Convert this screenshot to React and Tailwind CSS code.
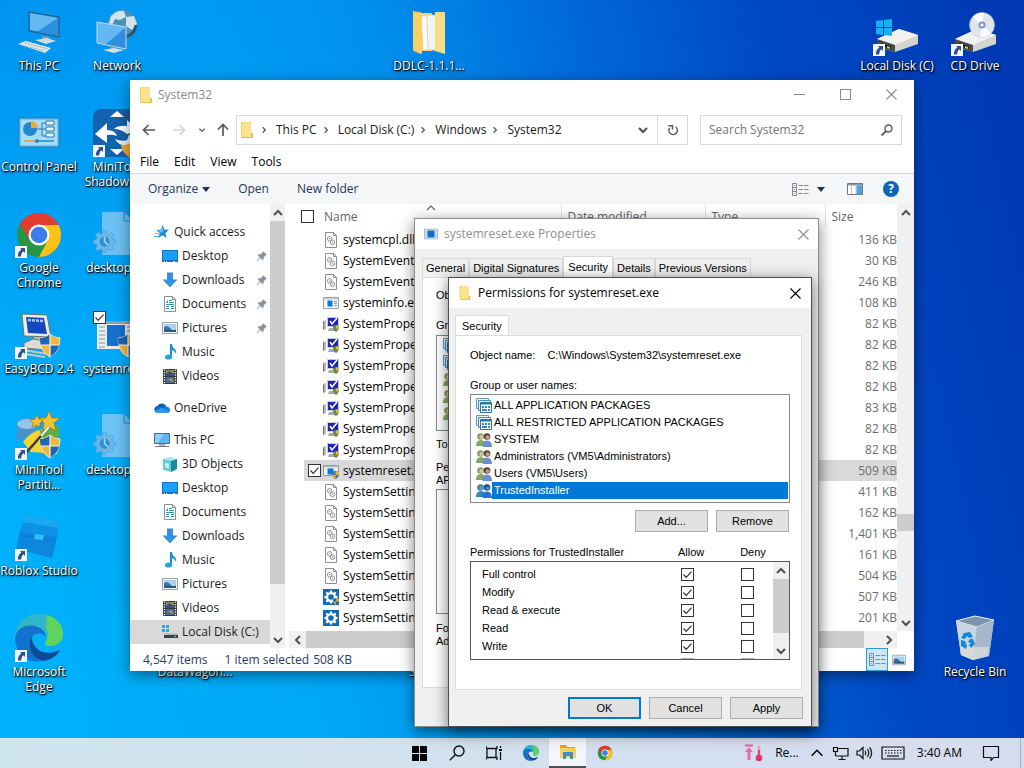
import React from 'react';
import { clsx } from 'clsx';

const files = [
  ['systemcpl.dll', '136 KB', 'dll'],
  ['SystemEventsBrokerClient.dll', '30 KB', 'dll'],
  ['SystemEventsBrokerServer.dll', '246 KB', 'dll'],
  ['systeminfo.exe', '108 KB', 'exe'],
  ['SystemPropertiesAdvanced.exe', '82 KB', 'props'],
  ['SystemPropertiesComputerName.exe', '82 KB', 'props'],
  ['SystemPropertiesDataExecutionPrevention.exe', '82 KB', 'props'],
  ['SystemPropertiesHardware.exe', '82 KB', 'props'],
  ['SystemPropertiesPerformance.exe', '83 KB', 'props'],
  ['SystemPropertiesProtection.exe', '82 KB', 'props'],
  ['SystemPropertiesRemote.exe', '82 KB', 'props'],
  ['systemreset.exe', '509 KB', 'reset'],
  ['SystemSettings.DataModel.dll', '411 KB', 'dll'],
  ['SystemSettings.DeviceEncryptionHandlers.dll', '162 KB', 'dll'],
  ['SystemSettings.Handlers.dll', '1,401 KB', 'dll'],
  ['SystemSettings.SettingsExtensibility.dll', '161 KB', 'dll'],
  ['SystemSettings.UserAccountsHandlers.dll', '504 KB', 'dll'],
  ['SystemSettingsAdminFlows.exe', '507 KB', 'gearShield'],
  ['SystemSettingsBroker.exe', '201 KB', 'gear'],
];

const quickAccess = [
  ['Desktop', 'desktop', true],
  ['Downloads', 'downloads', true],
  ['Documents', 'documents', true],
  ['Pictures', 'pictures', true],
  ['Music', 'music', false],
  ['Videos', 'videos', false],
];

const thisPc = [
  ['3D Objects', 'objects'],
  ['Desktop', 'desktop'],
  ['Documents', 'documents'],
  ['Downloads', 'downloads'],
  ['Music', 'music'],
  ['Pictures', 'pictures'],
  ['Videos', 'videos'],
  ['Local Disk (C:)', 'disk'],
];

const principals = [
  ['ALL APPLICATION PACKAGES', 'package'],
  ['ALL RESTRICTED APPLICATION PACKAGES', 'package'],
  ['SYSTEM', 'users'],
  ['Administrators (VM5\\Administrators)', 'users'],
  ['Users (VM5\\Users)', 'users'],
  ['TrustedInstaller', 'usersSelected'],
];

const permissions = ['Full control', 'Modify', 'Read & execute', 'Read', 'Write'];

/* ---------- small icons, 16x16 ---------- */

const gearPath = 'M7 1.5h2l.3 1.7 1.3.5 1.4-1 1.4 1.4-1 1.4.5 1.3 1.6.3v2l-1.6.3-.5 1.3 1 1.4-1.4 1.4-1.4-1-1.3.5-.3 1.6H7l-.3-1.6-1.3-.5-1.4 1-1.4-1.4 1-1.4-.5-1.3-1.6-.3v-2l1.6-.3.5-1.3-1-1.4L4 2.7l1.4 1 1.3-.5z';

const glyphs = {
  star: (
    <>
      <path d="M8.5 1l1.9 4.6 4.6.2-3.6 3.1 1.1 5-4-2.7L4.400 14l1.300-4.900L2.300 6l4.500-.3z" fill="#1c8fe0" />
      <path d="M0 12.500h5M1 9.500h4M3 7h3" stroke="#5bb4ee" strokeWidth="1" />
      <path d="M8.500 3l1.200 3.200-3 2.800-1.500-2.200z" fill="#5fbcf5" />
    </>
  ),
  desktop: (
    <>
      <path d="M0 2h16v12H0z" fill="#0a78d1" />
      <path d="M1 3h14v9H1z" fill="#18a0f5" />
      <path d="M2 13.500h1m1 0h1m6 0h2" stroke="#cfe9fb" strokeWidth="1" />
    </>
  ),
  downloads: <path d="M5 .5h6v7h4.500L8 15.500.5 7.500H5z" fill="#3a8fdc" />,
  documents: (
    <>
      <path d="M2.500.5h8l3 3v12h-11z" fill="#fff" stroke="#8a9299" />
      <path d="M10.500.5v3h3" fill="none" stroke="#8a9299" />
      <path d="M7 4.500h3M7 6.500h5M4 8.500h8M4 10.500h3m2 0h3M4 12.500h3m2 0h3" stroke="#3b93a8" />
      <path d="M4 7l2-3v3z" fill="#2b7cb5" />
    </>
  ),
  pictures: (
    <>
      <path d="M.5 2.500h15v11H.5z" fill="#f6f8fa" stroke="#9aa0a6" />
      <path d="M2 4h12v8H2z" fill="#a5d2ef" />
      <path d="M2 7q4-2 7 2t5 0v3H2z" fill="#3a6f99" />
      <path d="M2 10h12v2H2z" fill="#2a5a86" />
    </>
  ),
  music: (
    <>
      <path d="M8 0h2q0 3 2.500 5t1 5q0-3-3.500-4v7H8z" fill="#1590d6" />
      <ellipse cx="6.500" cy="13" rx="3.500" ry="2.600" fill="#22a1e6" />
    </>
  ),
  videos: (
    <>
      <path d="M1 1h14v15H1z" fill="#33383e" />
      <path d="M4 2h8v6H4z" fill="#8c9346" />
      <path d="M4 9h8v6H4z" fill="#4b6d9e" />
      <path d="M4 6l3-3 5 3v2H4z" fill="#3f4d8a" />
      <path d="M6 12l3-2 3 4z" fill="#c08b3e" />
      <path d="M2.500 1.500v14M13.500 1.500v14" stroke="#fff" strokeWidth="1.400" strokeDasharray="1.300 1.200" />
    </>
  ),
  cloud: (
    <>
      <path d="M3.500 13a3.500 3.500 0 01-.3-6.900A5 5 0 0112.400 7 3 3 0 0113 13z" fill="#0c62bd" />
      <path d="M6 13l-3-.1L1 11l6.500-3.500L15.800 11q-.8 2-2.800 2z" fill="#2a9cec" />
      <path d="M8 7.800l4.400-1q3 .2 3.500 3.200l-.5 1.500z" fill="#1681dc" />
    </>
  ),
  pc: (
    <>
      <path d="M.5 1.500h15v10H.5z" fill="#5fb4ef" stroke="#3e7193" />
      <path d="M1 2h9L4 11H1z" fill="#8ad0fb" />
      <path d="M5 12h6v2H5z" fill="#a6b3bd" />
      <path d="M1 14.500h14" stroke="#6d7f8c" />
    </>
  ),
  objects: (
    <>
      <path d="M1 3l7-2 7 2-6 2z" fill="#9fe8ee" />
      <path d="M1 3l8 2v11l-8-2.500z" fill="#5fcbd3" />
      <path d="M9 5l6-2v10l-6 3z" fill="#168a9f" />
      <path d="M3 6.500l4 1v5l-4-1z" fill="#b8f0f3" />
    </>
  ),
  disk: (
    <>
      <path d="M0 1h3v3H0zm4 0h3v3H4zM0 5h3v3H0zm4 0h3v3H4z" fill="#12b2ee" />
      <path d="M3 9h12l1 2H2z" fill="#b9bcc0" />
      <path d="M2 11h14v3H2z" fill="#3c4146" />
      <path d="M12 12.500h2" stroke="#5be35b" />
    </>
  ),
  dll: (
    <>
      <path d="M2.500.5h8l3 3v12h-11z" fill="#fdfdfd" stroke="#8d8f92" />
      <path d="M10.500.5v3h3" fill="none" stroke="#8d8f92" />
      <circle cx="6.700" cy="6.800" r="2.300" fill="none" stroke="#8f959b" />
      <circle cx="9.500" cy="10.300" r="2.300" fill="none" stroke="#8f959b" />
      <circle cx="6.700" cy="6.800" r=".8" fill="#8f959b" />
      <circle cx="9.500" cy="10.300" r=".8" fill="#8f959b" />
    </>
  ),
  exe: (
    <>
      <path d="M.5 2.500h15v11H.5z" fill="#f3f6f8" stroke="#9aa4ac" />
      <path d="M1 3h14v1.500H1z" fill="#c3cdd5" />
      <path d="M4.500 5.500h5v6h-5z" fill="#0f76d2" />
      <path d="M11 6.500h3M11 8.500h3M11 10.500h3" stroke="#69a892" />
    </>
  ),
  exeWindow: (
    <>
      <path d="M.5 2.500h15v11H.5z" fill="#dbe7f0" stroke="#9db4c6" />
      <path d="M4 4h8v8H4z" fill="#0d6fc9" />
      <path d="M2.500 4v8M13.500 4v8" stroke="#b9d3e6" strokeWidth="1.500" />
    </>
  ),
  props: (
    <>
      <path d="M0 5l3-1v9l-3 1z" fill="#b9bcbf" />
      <path d="M.5 5.500v8" stroke="#6f7275" />
      <path d="M4 1h12v10H4z" fill="#c9ccd0" />
      <path d="M5 2h10v8H5z" fill="#1c25b8" />
      <path d="M7 5l2 3 5-6" fill="none" stroke="#fff" strokeWidth="1.500" />
      <path d="M6 12h8v3H5z" fill="#a7abaf" />
      <path d="M10 10l3-1 3 1v2q-1 3-3 4-2-1-3-4z" fill="#6c8b4b" />
      <path d="M13 9l3 1v2.500h-3z" fill="#d9bb43" />
    </>
  ),
  reset: (
    <>
      <path d="M.5 2.500h15v10H.5z" fill="#eef3f7" stroke="#8c98a3" />
      <path d="M1 3h14v1.500H1z" fill="#b6c3cd" />
      <path d="M4.500 5.500h6v6h-6z" fill="#0f76d2" />
      <path d="M9 9l3.500-1.500L16 9v3q-1 3-3.500 4Q10 15 9 12z" fill="#3577b9" />
      <path d="M12.500 7.500L16 9v3h-3.500zM9 12h3.500v4Q10 15 9 12z" fill="#e2b338" />
    </>
  ),
  gear: (
    <>
      <path d="M0 0h16v16H0z" fill="#0f6cbd" />
      <path d={gearPath} fill="#fff" />
      <circle cx="8" cy="8" r="2.800" fill="#0f6cbd" />
    </>
  ),
  gearShield: (
    <>
      <path d="M0 0h16v16H0z" fill="#0f6cbd" />
      <path d={gearPath} fill="#fff" />
      <circle cx="8" cy="8" r="2.800" fill="#0f6cbd" />
      <path d="M10 10l3-1 3 1v2q-1 3-3 4-2-1-3-4z" fill="#2a68ad" />
      <path d="M13 9l3 1v2.500h-3zM10 12.500h3V16q-2-1-3-3.500z" fill="#dba93a" />
    </>
  ),
  folder: (
    <>
      <path d="M2 0h10v14H2z" fill="#fbdf7e" />
      <path d="M2 0h2v16H2z" fill="#f0cf63" />
      <path d="M3 2l9-1v15H3z" fill="#fce38c" />
      <path d="M12 11h2v5H3v-1h9z" fill="#e9c14d" />
    </>
  ),
  package: (
    <>
      <path d="M.5.5h12v10H.5z" fill="#e8f3fb" stroke="#5d9cc4" />
      <path d="M2.500 2.500h12v10h-12z" fill="#e8f3fb" stroke="#4a8fbb" />
      <path d="M4.500 4.500h11v10h-11z" fill="#fff" stroke="#2b76a8" />
      <path d="M5 5h10v1.500H5z" fill="#2b76a8" />
      <path d="M6 8h2v2H6zm3 0h2v2H9zm3 0h2v2h-2zM6 11h5v2H6zm6 0h2v2h-2z" fill="#3b88bc" />
    </>
  ),
  users: (
    <>
      <circle cx="4.500" cy="4.500" r="3.300" fill="#8d9b5c" />
      <circle cx="5.300" cy="5" r="1.900" fill="#d5c79a" />
      <path d="M0 14q0-6 5-6t5 6z" fill="#86a862" />
      <circle cx="11" cy="4.500" r="3.300" fill="#5a4138" />
      <circle cx="11.600" cy="5.200" r="1.900" fill="#c99f86" />
      <path d="M6.500 15q0-6.500 4.700-6.500T16 15z" fill="#6a8fd0" />
    </>
  ),
  usersSelected: (
    <>
      <circle cx="4.500" cy="4.500" r="3.300" fill="#3c83b1" />
      <circle cx="5.300" cy="5" r="1.900" fill="#5c9cc4" />
      <path d="M0 14q0-6 5-6t5 6z" fill="#3187bb" />
      <circle cx="11" cy="4.500" r="3.300" fill="#174f93" />
      <circle cx="11.600" cy="5.200" r="1.900" fill="#4c86bd" />
      <path d="M6.500 15q0-6.500 4.700-6.500T16 15z" fill="#2370cf" />
    </>
  ),
  pin: (
    <path d="M9.500 2.500l4 4-1.200.6-2.300 2.200-.3 2.700-1 .8-2.500-2.500L2.500 14l-.6-.5 3.500-3.800L3 7.200l.8-1 2.700-.3L8.700 3.700z" fill="#8b9299" />
  ),
};

function Glyph({ name, className = 'size-4' }) {
  return (
    <svg viewBox="0 0 16 16" className={clsx('shrink-0', className)} aria-hidden="true">
      {glyphs[name]}
    </svg>
  );
}

const chevrons = {
  up: 'M2 8l4-4 4 4',
  down: 'M2 4l4 4 4-4',
  left: 'M8 2L4 6l4 4',
  right: 'M4 2l4 4-4 4',
};

function Chevron({ dir, className = 'size-3 text-[#505050]', width = 2 }) {
  return (
    <svg viewBox="0 0 12 12" className={clsx('shrink-0', className)} fill="none" stroke="currentColor" strokeWidth={width} aria-hidden="true">
      <path d={chevrons[dir]} />
    </svg>
  );
}

function Cross({ className }) {
  return (
    <svg viewBox="0 0 11 11" className={clsx('size-[11px]', className)} stroke="currentColor" strokeWidth="1.100" aria-hidden="true">
      <path d="M.5.5l10 10M10.500.5l-10 10" />
    </svg>
  );
}

function Check({ label, checked = false }) {
  return (
    <span className="inline-grid size-[13px] shrink-0 align-top">
      <input
        type="checkbox"
        aria-label={label}
        defaultChecked={checked}
        className="peer col-start-1 row-start-1 size-[13px] appearance-none border border-[#333] bg-white"
      />
      <svg viewBox="0 0 13 13" className="pointer-events-none invisible col-start-1 row-start-1 size-[13px] peer-checked:visible" fill="none" stroke="#333" strokeWidth="1.200" aria-hidden="true">
        <path d="M2.500 6.500l2.700 2.800 5.300-5.600" />
      </svg>
    </span>
  );
}

/* ---------- desktop icons, 48x48 ---------- */

function Shield() {
  return (
    <>
      <path d="M25 27q6 0 10-4 4 4 10 4 0 14-10 19-10-5-10-19z" fill="#f0b73c" stroke="#e8e4d4" />
      <path d="M35 23q-4 4-10 4 0 4 .8 7H35zM35 34h9.200Q42 42 35 46z" fill="#1d65b5" />
      <path d="M35 23v23M26 34h18" stroke="#f5f5f0" strokeWidth="1.200" />
    </>
  );
}

function ChromeMark() {
  return (
    <>
      <circle cx="24" cy="24" r="22" fill="#269645" />
      <path d="M24 14h19.600A22 22 0 0124 46l9-17z" fill="#fbc116" />
      <path d="M4.900 13A22 22 0 0143.600 14H24L15 29z" fill="#e33b2e" />
      <circle cx="24" cy="24" r="10.500" fill="#fff" />
      <circle cx="24" cy="24" r="8.300" fill="#3b7de9" />
    </>
  );
}

function EdgeMark() {
  return (
    <>
      <path d="M0 22C1 8 11 0 24 0c14 0 24 9 24 20 0 8-6 12-13 12-5 0-6-2-4-5 3-6-2-12-9-12C12 15 4 19 0 26z" fill="#2fb6c8" />
      <path d="M32 1c10 3 16 10 16 19 0 8-6 12-13 12-5 0-6-2-4-5 3-6 2-10 0-13z" fill="#5fd35e" />
      <path d="M0 24C1 15 10 10 19 12c7 1 12 6 12 11-3-4-10-5-14 0-6 8-1 20 10 24C12 50 0 39 0 24z" fill="#1273ce" />
      <path d="M17 23c-6 9 0 21 11 24 8-1 13-5 16-9 1-2 0-2-2-1-12 5-25-1-25-14z" fill="#0c4b95" />
    </>
  );
}

const FileGear = (
  <>
    <path d="M9 2h22l9 9v34H9z" fill="#7fc8f5" opacity=".85" />
    <path d="M31 2v9h9" fill="none" stroke="#2a86bd" />
    <g transform="translate(-2 18) scale(1.700)">
      <path d={gearPath} fill="#6db7e8" stroke="#4b9fd5" strokeWidth=".4" />
      <circle cx="8" cy="8" r="3" fill="#2f8fd0" />
      <path d="M8 5v3l2 2" fill="none" stroke="#9bd3f5" />
    </g>
  </>
);

const Drive = (
  <>
    <path d="M4 31l22-10 19 6v9L22 44 4 39z" fill="#d4d4d2" />
    <path d="M4 31l22-10 19 6-23 10z" fill="#f1f1ef" />
    <path d="M4 31l18 6v7L4 39z" fill="#4b4b48" />
    <path d="M8 35l10 3v3L8 38z" fill="#20201e" />
    <path d="M14 38l3 1v2l-3-1z" fill="#b3dd45" />
  </>
);

const artwork = {
  pc: (
    <>
      <path d="M15 5l28 5v18l-28-6z" fill="#2f8fdf" />
      <path d="M15 5l28 5-20 13-8-1z" fill="#65b9f2" />
      <path d="M14 4l30 5v20l-30-6z" fill="none" stroke="#31556f" />
      <path d="M27 28l7 1v4h-7z" fill="#8b9aa6" />
      <path d="M20 32l12-2 9 3-10 3z" fill="#d5dce1" />
      <path d="M3 36l8-3 25 7-6 5z" fill="#e4e8ea" />
      <path d="M6 37l24 6M10 35l23 6" stroke="#98a7b1" strokeDasharray="2 1" />
    </>
  ),
  network: (
    <>
      <circle cx="29" cy="17" r="15" fill="#4d8fb5" />
      <path d="M18 8q6-6 13-5l2 6-6 3-5-1-3 6-3-2zM33 9l8-1 3 8-5 6-6-4z" fill="#cfe3ec" />
      <path d="M33 29q9-3 10-12" stroke="#2b5673" strokeWidth="3" fill="none" />
      <path d="M4 14l29 5v22L4 35z" fill="#2f8fdf" />
      <path d="M4 14l29 5-20 17-9-1z" fill="#64b8f2" />
      <path d="M4 14l29 5v22L4 35z" fill="none" stroke="#c5dae8" />
      <path d="M17 38l6 1v3h-6z" fill="#8b9aa6" />
      <path d="M10 42l11-2 10 2-10 3z" fill="#d5dce1" />
    </>
  ),
  control: (
    <>
      <path d="M4 9h40v29H4z" fill="#72c6f3" stroke="#2a79ad" />
      <path d="M6 11h36v25H6z" fill="#a3ddf8" />
      <circle cx="15" cy="20" r="7" fill="#2487cf" />
      <path d="M16 19v-7a7 7 0 017 7z" fill="#f2a93a" />
      <path d="M22 20h5v-6h4m-4 6h4m-4 0v7h4" stroke="#2f7aa8" fill="none" />
      <path d="M31 12h8v4h-8zm0 6h8v4h-8zm0 6h8v4h-8z" fill="#e5f6fd" stroke="#2f7aa8" />
      <path d="M9 32h12" stroke="#e59432" strokeWidth="1.500" />
      <path d="M21 32h18" stroke="#2487cf" strokeWidth="1.500" />
      <circle cx="22" cy="32" r="2" fill="#2487cf" />
    </>
  ),
  shadowMaker: (
    <>
      <rect width="48" height="48" rx="8" fill="#1262ad" />
      <path d="M24 2l7 6H17zM24 46l7-6H17z" fill="#fff" />
      <path d="M2 25l12-11v7q8 0 10 6-5-2-10-1v8z" fill="#fff" />
      <path d="M46 22L34 11v6q-9-1-13 3 7 0 13 5z" fill="#fff" />
      <path d="M46 26L36 36q-10 2-14-6 7 3 12 1l2-5z" fill="#e9f1f8" />
      <path d="M28 36q8 0 11-3 4 3 9 3v12H36q-7-4-8-12z" fill="#f0a92d" />
    </>
  ),
  chrome: (
    <g transform="translate(0 1)">
      <ChromeMark />
    </g>
  ),
  fileGear: FileGear,
  easybcd: (
    <>
      <path d="M7 3l25 1 4 22-27-1z" fill="#ecebe4" stroke="#72706a" />
      <path d="M11 6l18 1 3 16-19-1z" fill="#1447c0" />
      <path d="M13 9l16 1" stroke="#a9c8f7" strokeWidth="2.500" strokeDasharray="3 1" />
      <path d="M19 26h9v4h-9z" fill="#b8b6ae" />
      <path d="M9 32l9-4 18 3-5 8-22-2z" fill="#dddcd4" stroke="#77756e" />
      <path d="M10 43l20 3M8 39l25 4" stroke="#c9c8c1" strokeWidth="2" />
      <Shield />
    </>
  ),
  sysreset: (
    <>
      <path d="M4 10h44v28H4z" fill="#e8ecef" />
      <path d="M4 10h44v3H4z" fill="#95a1aa" />
      <path d="M6 16h6M6 20h6M6 24h6M6 28h6M6 32h6M6 36h6" stroke="#8e99a1" />
      <path d="M14 14h18v21H14z" fill="#1671cc" />
      <path d="M34 16h8M34 20h8" stroke="#6c7981" />
      <Shield />
    </>
  ),
  partition: (
    <>
      <path d="M2 11q8-8 20-3v14Q12 24 2 30z" fill="#4c92ca" />
      <ellipse cx="12" cy="12" rx="10" ry="5" fill="#95c5e7" />
      <path d="M8 30q10-14 28-14l8 6-2 20-26-2z" fill="#f1d535" />
      <path d="M24 18l20-4v12H28z" fill="#60ae3f" />
      <path d="M34-1l3 7 8 0-6 5 2 8-7-4-6 4 1-8-5-5 7 0z" fill="#f6c22f" stroke="#a07311" strokeWidth=".7" />
      <path d="M22 3l2 4 4 1-3 3v4l-4-2-4 2 1-4-3-3 5-1z" fill="#f6c22f" stroke="#a07311" strokeWidth=".7" />
      <path d="M10 42l24-27" stroke="#383838" strokeWidth="2.500" />
      <path d="M26 24l8-9" stroke="#f5f5f5" strokeWidth="2" />
      <Shield />
    </>
  ),
  roblox: (
    <>
      <path d="M10 1l34 8-2 15-37-6z" fill="#1ba7f2" />
      <path d="M8 9l35 6-1 9-37-6z" fill="#0d91e4" />
      <path d="M5 18l37 6-5 21-36-9z" fill="#0c87dc" />
      <path d="M20 21l9 1-1 5-9-1z" fill="#2fc1fb" />
      <path d="M4 22l15 2m9 2l13 2" stroke="#0a74cf" />
    </>
  ),
  edge: <EdgeMark />,
  zipFolder: (
    <>
      <path d="M8 3l8 1v42l-8-3z" fill="#eab948" />
      <path d="M10 5h17v38H14z" fill="#f8d775" />
      <path d="M16 8h14v34H18z" fill="#fafafa" stroke="#d6c48c" strokeWidth=".7" />
      <path d="M22 7h12v35H23z" fill="#f1f3f5" stroke="#d6c48c" strokeWidth=".7" />
      <path d="M30 4h10v42l-10-3z" fill="#f9dd86" />
      <path d="M8 3l9 5v38l-9-4z" fill="#f7d168" />
    </>
  ),
  disk: (
    <>
      {Drive}
      <path d="M3 13l7-1v7H3zm8-1l8-1v8h-8zM3 20h7v7l-7-1zm8 0h8v8l-8-1z" fill="#14b2f4" />
    </>
  ),
  cd: (
    <>
      {Drive}
      <circle cx="31" cy="17" r="12.500" fill="#dfe6ea" stroke="#b4bfc6" strokeWidth=".5" />
      <path d="M31 17l-9-8a12 12 0 0111-4zM31 17l9 8a12 12 0 01-11 4z" fill="#fafbfc" />
      <circle cx="31" cy="17" r="3.500" fill="#7a95d0" />
      <circle cx="31" cy="17" r="1.600" fill="#fff" />
    </>
  ),
  bin: (
    <>
      <path d="M5 7l19-5 19 4-5 36-16 4-12-5z" fill="#b9c8da" />
      <path d="M5 7l19-5 19 4-17 7z" fill="#7d95ad" stroke="#e8eef3" />
      <path d="M5 7l21 6-4 33-12-5z" fill="#c9d5e2" />
      <path d="M26 13l17-7-5 36-16 4z" fill="#a7b7cb" />
      <path d="M9 33l29 0-1 9-15 4-12-5z" fill="#d9dbd8" opacity=".8" />
      <path d="M13 19l6-1 3 5-4 1-2-2-2 3-4-1zM22 25l2 5-4 4-2-3 2-2-3-1 2-3zM10 26l4 1 2 5-1 3-5-3z" fill="#128adb" />
    </>
  ),
  none: null,
};

const desktopItems = [
  { label: 'This PC', art: 'pc', cell: 'col-start-1 row-start-1' },
  { label: 'Network', art: 'network', cell: 'col-start-2 row-start-1' },
  { label: 'DDLC-1.1.1...', art: 'zipFolder', cell: 'col-start-6 row-start-1' },
  { label: 'Local Disk (C)', art: 'disk', cell: 'col-start-12 row-start-1', shortcut: true },
  { label: 'CD Drive', art: 'cd', cell: 'col-start-13 row-start-1', shortcut: true },
  { label: 'Control Panel', art: 'control', cell: 'col-start-1 row-start-2' },
  { label: 'MiniTool ShadowM...', art: 'shadowMaker', cell: 'col-start-2 row-start-2', shortcut: true },
  { label: 'Google Chrome', art: 'chrome', cell: 'col-start-1 row-start-3', shortcut: true },
  { label: 'desktop.ini', art: 'fileGear', cell: 'col-start-2 row-start-3' },
  { label: 'EasyBCD 2.4', art: 'easybcd', cell: 'col-start-1 row-start-4', shortcut: true },
  { label: 'systemreset', art: 'sysreset', cell: 'col-start-2 row-start-4', selected: true },
  { label: 'MiniTool Partiti...', art: 'partition', cell: 'col-start-1 row-start-5', shortcut: true },
  { label: 'desktop.ini', art: 'fileGear', cell: 'col-start-2 row-start-5' },
  { label: 'Roblox Studio', art: 'roblox', cell: 'col-start-1 row-start-6', shortcut: true },
  { label: 'Microsoft Edge', art: 'edge', cell: 'col-start-1 row-start-7', shortcut: true },
  { label: 'DataWagon...', art: 'none', cell: 'col-start-3 row-start-7' },
  { label: 'System', art: 'none', cell: 'col-start-6 row-start-7' },
  { label: 'Recycle Bin', art: 'bin', cell: 'col-start-13 row-start-7' },
];

function DesktopIcon({ label, art, cell, shortcut, selected }) {
  return (
    <div className={clsx('flex flex-col items-center pt-2', cell)}>
      <div className="relative size-12">
        <svg viewBox="0 0 48 48" className="size-12" aria-hidden="true">
          {artwork[art]}
        </svg>
        {shortcut && (
          <svg viewBox="0 0 12 12" className="absolute bottom-0 left-0 size-3" aria-hidden="true">
            <path d="M0 0h12v12H0z" fill="#f4f6f8" />
            <path d="M5 2h5v5L8.300 5.300Q6 7 6 10.500H3Q2.500 6 6.500 3.600z" fill="#2b4f8f" />
          </svg>
        )}
        {selected && (
          <span className="absolute top-0 left-0 flex">
            <Check label={`Select ${label}`} checked />
          </span>
        )}
      </div>
      <span className="mt-0.5 text-center leading-[15px] text-white [text-shadow:1px_1px_1px_#000,0_1px_3px_#000]">{label}</span>
    </div>
  );
}

/* ---------- explorer window ---------- */

function TitleBar() {
  return (
    <div className="flex h-[29px] shrink-0 items-center pl-2 text-[#8a8a8a]">
      <Glyph name="folder" />
      <span className="ml-1 flex-1">System32</span>
      <button aria-label="Minimize" className="flex h-full w-[46px] items-center justify-center">
        <span className="h-px w-[11px] bg-current" />
      </button>
      <button aria-label="Maximize" className="flex h-full w-[46px] items-center justify-center">
        <span className="size-[11px] border border-current" />
      </button>
      <button aria-label="Close" className="flex h-full w-[46px] items-center justify-center">
        <Cross />
      </button>
    </div>
  );
}

function Arrow({ path, label, className }) {
  return (
    <button aria-label={label} className={className}>
      <svg viewBox="0 0 14 14" className="size-3.5" fill="none" stroke="currentColor" strokeWidth="1.700" aria-hidden="true">
        <path d={path} />
      </svg>
    </button>
  );
}

function AddressRow() {
  return (
    <div className="flex h-[42px] shrink-0 items-center px-3 text-[#1a1a1a]">
      <Arrow label="Back" path="M13 7H1.500M6.500 2l-5 5 5 5" className="text-[#5a5a5a]" />
      <Arrow label="Forward" path="M1 7h11.500M7.500 2l5 5-5 5" className="ml-4 text-[#d4d4d4]" />
      <button aria-label="Recent locations" className="ml-3">
        <Chevron dir="down" className="size-2 text-[#6a6a6a]" />
      </button>
      <Arrow label="Up" path="M7 13V1.500M2 6.500l5-5 5 5" className="ml-2.5 text-[#5a5a5a]" />
      <div className="ml-1.5 flex h-[30px] flex-1 items-center border border-[#d9d9d9] pl-0.5">
        <Glyph name="folder" />
        <nav className="flex flex-1 items-center" aria-label="Address">
          {['This PC', 'Local Disk (C:)', 'Windows', 'System32'].map((part) => (
            <React.Fragment key={part}>
              <Chevron dir="right" className="mr-2 ml-[5px] size-2 text-[#5a5a5a]" />
              <button>{part}</button>
            </React.Fragment>
          ))}
        </nav>
        <button aria-label="Previous locations" className="mr-2">
          <Chevron dir="down" />
        </button>
        <button aria-label="Refresh" className="flex h-full w-[30px] items-center justify-center border-l border-[#d9d9d9]">
          <svg viewBox="0 0 12 12" className="size-3" fill="none" stroke="#5a5a5a" strokeWidth="1.500" aria-hidden="true">
            <path d="M8.700 3A4.200 4.200 0 112.600 4M1.500 1.800h4v3.700" />
          </svg>
        </button>
      </div>
      <label className="ml-3 flex h-[30px] w-[202px] items-center border border-[#d9d9d9] px-2">
        <input aria-label="Search System32" placeholder="Search System32" className="min-w-0 flex-1 outline-none placeholder:text-[#757575]" />
        <svg viewBox="0 0 12 12" className="size-3 shrink-0" fill="none" stroke="#5a5a5a" strokeWidth="1.400" aria-hidden="true">
          <circle cx="7.500" cy="4.500" r="3.500" />
          <path d="M5 7L.5 11.500" strokeWidth="1.800" />
        </svg>
      </label>
    </div>
  );
}

function DetailsIcon() {
  return (
    <svg viewBox="0 0 17 13" className="h-[13px] w-[17px]" fill="none" stroke="#85898d" aria-hidden="true">
      <path d="M.5.5h4v12h-4zM.5 4.500h4M.5 8.500h4" />
      <path d="M2 2.500h1M2 6.500h1M2 10.500h1M6.500 2.500H11m1 0h4.500M6.500 6.500H11m1 0h4.500M6.500 10.500H11m1 0h4.500" />
    </svg>
  );
}

function Triangle() {
  return (
    <svg viewBox="0 0 8 5" className="h-[5px] w-2" aria-hidden="true">
      <path d="M0 0h8L4 5z" fill="#1e3250" />
    </svg>
  );
}

function Toolbar() {
  return (
    <div className="flex h-[31px] shrink-0 items-center border-t border-[#d6d9dc] bg-[#f5f6f8] pr-[15px] pl-[18px] text-[#1f3659]">
      <button className="flex items-center gap-1">
        Organize <Triangle />
      </button>
      <button className="ml-7">Open</button>
      <button className="ml-7">New folder</button>
      <button aria-label="Change view" className="ml-auto flex items-center gap-2">
        <DetailsIcon />
        <Triangle />
      </button>
      <button aria-label="Preview pane" className="ml-[22px]">
        <svg viewBox="0 0 16 12" className="h-3 w-4" aria-hidden="true">
          <path d="M.5.5h15v11H.5z" fill="#fff" stroke="#6f7b86" />
          <path d="M1 1h14v1.500H1z" fill="#8b98a4" />
          <path d="M9.500 2.500H15V11H9.500z" fill="#4fa3e0" />
          <path d="M4.500 2v9M9 2v9" stroke="#a5b0ba" strokeWidth=".7" />
        </svg>
      </button>
      <button aria-label="Help" className="ml-5 flex size-4 items-center justify-center rounded-full bg-[#0a64b8] font-bold text-white">
        ?
      </button>
    </div>
  );
}

function NavRow({ icon, label, pinned, top, active }) {
  return (
    <li>
      <a href="#" className={clsx('flex h-6 items-center gap-1 text-[#1b1b1b]', top ? 'pl-6' : 'pl-8', active && 'bg-[#d9d9d9]')}>
        <Glyph name={icon} />
        <span className="flex-1 whitespace-nowrap">{label}</span>
        {pinned && <Glyph name="pin" className="mr-px size-3.5" />}
      </a>
    </li>
  );
}

function NavPane() {
  return (
    <div className="flex w-[155px] shrink-0">
      <nav className="w-[140px] pt-4" aria-label="Folders">
        <ul>
          <NavRow icon="star" label="Quick access" top />
          {quickAccess.map(([label, icon, pinned]) => (
            <NavRow key={label} icon={icon} label={label} pinned={pinned} />
          ))}
        </ul>
        <ul className="mt-2">
          <NavRow icon="cloud" label="OneDrive" top />
        </ul>
        <ul className="mt-2">
          <NavRow icon="pc" label="This PC" top />
          {thisPc.map(([label, icon]) => (
            <NavRow key={label} icon={icon} label={label} active={icon === 'disk'} />
          ))}
        </ul>
      </nav>
      <div className="flex flex-1 flex-col bg-[#f0f0f0]">
        <span className="flex h-[17px] items-center justify-center"><Chevron dir="up" /></span>
        <span className="h-[363px] bg-[#cdcdcd]" />
        <span className="mt-auto flex h-[17px] items-center justify-center"><Chevron dir="down" /></span>
      </div>
    </div>
  );
}

function FileList() {
  return (
    <div className="flex min-w-0 flex-1 flex-col">
      <div className="flex min-h-0 flex-1">
        <div className="min-w-0 flex-1">
          <table className="w-full table-fixed border-collapse text-left">
            <colgroup>
              <col className="w-[276px]" />
              <col className="w-[144px]" />
              <col className="w-[120px]" />
              <col />
            </colgroup>
            <thead>
              <tr className="h-[25px] text-[#5d6670]">
                <th className="p-0 font-normal">
                  <span className="relative flex items-center gap-2.5 pl-4">
                    <Check label="Select all" />
                    Name
                    <Chevron dir="up" width={1.2} className="absolute -top-1.5 left-[140px] size-3 text-[#5d6670]" />
                  </span>
                </th>
                <th className="border-l border-[#e3e3e3] p-0 pl-1.5 font-normal">Date modified</th>
                <th className="border-l border-[#e3e3e3] p-0 pl-1.5 font-normal">Type</th>
                <th className="border-l border-[#e3e3e3] p-0 pl-1.5 font-normal">Size</th>
              </tr>
            </thead>
            <tbody>
              {files.map(([name, size, icon]) => (
                <tr key={name} className="h-[21px]">
                  <td className="p-0">
                    <div className={clsx('ml-[19px] flex h-[21px] items-center pl-1', icon === 'reset' && 'bg-[#d9d9d9]')}>
                      <span className="flex w-[15px] shrink-0">{icon === 'reset' && <Check label={`Select ${name}`} checked />}</span>
                      <Glyph name={icon} />
                      <span className="ml-1 truncate text-black">{name}</span>
                    </div>
                  </td>
                  <td className={clsx('p-0', icon === 'reset' && 'bg-[#d9d9d9]')} />
                  <td className={clsx('p-0', icon === 'reset' && 'bg-[#d9d9d9]')} />
                  <td className={clsx('p-0 text-right whitespace-nowrap text-[#6d6d6d]', icon === 'reset' && 'bg-[#d9d9d9]')}>{size}</td>
                </tr>
              ))}
            </tbody>
          </table>
        </div>
        <div className="flex w-[17px] flex-col bg-[#f0f0f0]">
          <span className="flex h-[17px] items-center justify-center"><Chevron dir="up" /></span>
          <span className="mt-[293px] h-[17px] bg-[#cdcdcd]" />
          <span className="mt-auto flex h-[17px] items-center justify-center"><Chevron dir="down" /></span>
        </div>
      </div>
      <div className="mr-[17px] ml-1 flex h-[17px] shrink-0 bg-[#f0f0f0]">
        <span className="flex w-[17px] items-center justify-center"><Chevron dir="left" /></span>
        <span className="mr-4 flex-1 bg-[#cdcdcd]" />
        <span className="flex w-[17px] items-center justify-center"><Chevron dir="right" /></span>
      </div>
    </div>
  );
}

function Explorer() {
  return (
    <section aria-label="System32" className="absolute top-20 left-[130px] flex h-[591px] w-[784px] flex-col bg-white shadow-[0_4px_14px_rgba(0,0,0,0.45)]">
      <TitleBar />
      <AddressRow />
      <div className="flex h-[22px] shrink-0 items-center gap-[15px] pl-2.5 text-black">
        {['File', 'Edit', 'View', 'Tools'].map((item) => (
          <button key={item}>{item}</button>
        ))}
      </div>
      <Toolbar />
      <div className="flex min-h-0 flex-1">
        <NavPane />
        <FileList />
      </div>
      <footer className="flex h-[23px] shrink-0 items-center pr-2 pl-[13px] text-[#2b3b63]">
        <span>4,547 items</span>
        <span className="ml-[17px]">1 item selected</span>
        <span className="ml-1 flex-1">508 KB</span>
        <button aria-label="Details view" className="flex h-full w-[22px] items-center justify-center border border-[#26a0da] bg-[#cbe8f6]">
          <DetailsIcon />
        </button>
        <button aria-label="Large icons view" className="ml-1">
          <Glyph name="pictures" className="size-3.5" />
        </button>
      </footer>
    </section>
  );
}

/* ---------- dialogs ---------- */

function Properties() {
  const tabs = ['General', 'Digital Signatures', 'Security', 'Details', 'Previous Versions'];
  return (
    <section aria-label="systemreset.exe Properties" className="absolute top-[218px] left-[414px] flex h-[509px] w-[405px] flex-col border border-[#8b8b8b] bg-[#f0f0f0] shadow-[0_4px_14px_rgba(0,0,0,0.5)]">
      <div className="flex h-[30px] shrink-0 items-center bg-white px-[9px] text-[#8f8f8f]">
        <Glyph name="exeWindow" className="size-3.5" />
        <span className="ml-1.5 flex-1">systemreset.exe Properties</span>
        <button aria-label="Close"><Cross /></button>
      </div>
      <div className="flex flex-1 flex-col px-[7px] pt-[7px] pb-[38px] font-['Liberation_Sans',Arial,sans-serif] text-[11px] text-black">
        <div className="flex h-[21px] items-end" role="tablist">
          {tabs.map((tab) => (
            <button
              key={tab}
              role="tab"
              className={clsx(
                'border border-b-0 border-[#d9d9d9] whitespace-nowrap',
                tab === 'Security' ? 'h-[21px] bg-white px-1' : 'h-[19px] px-[3px]',
              )}
            >
              {tab}
            </button>
          ))}
        </div>
        <div className="flex flex-1 flex-col border border-[#dcdcdc] bg-white px-[13px] pt-[11px] leading-[13px]">
          <p>Object</p>
          <p className="mt-[17px]">Group</p>
          <ul className="mt-[3px] h-24 border border-[#828790] py-0.5 pl-1.5">
            {principals.slice(0, 5).map(([name, icon]) => (
              <li key={name} className="h-[17px]"><Glyph name={icon} /></li>
            ))}
          </ul>
          <p className="mt-[7px]">To</p>
          <p className="mt-2.5">Per</p>
          <p>APP</p>
          <div className="mt-0.5 h-[125px] border border-[#828790]" />
          <p className="mt-2">For</p>
          <p>Adv</p>
        </div>
      </div>
    </section>
  );
}

function DialogButton({ children, primary }) {
  return (
    <button className={clsx('h-[22px] w-[73px] bg-[#e1e1e1]', primary ? 'border-2 border-[#0078d7]' : 'border border-[#adadad]')}>
      {children}
    </button>
  );
}

function Permissions() {
  return (
    <section aria-label="Permissions for systemreset.exe" className="absolute top-[277px] left-[448px] flex h-[450px] w-[364px] flex-col border border-[#4e4e4e] bg-[#f0f0f0] shadow-[0_3px_14px_rgba(0,0,0,0.55)]">
      <div className="flex h-[30px] shrink-0 items-center bg-white pr-2.5 pl-[9px] text-black">
        <Glyph name="folder" className="size-3.5" />
        <span className="ml-1.5 flex-1">Permissions for systemreset.exe</span>
        <button aria-label="Close"><Cross /></button>
      </div>
      <div className="flex flex-1 flex-col pt-[7px] pr-2 pb-[7px] pl-1.5 font-['Liberation_Sans',Arial,sans-serif] text-[11px] leading-[13px] text-black">
        <div className="flex" role="tablist">
          <button role="tab" aria-selected="true" className="-mb-px h-[21px] border border-b-0 border-[#dcdcdc] bg-white px-1.5">Security</button>
        </div>
        <div className="mr-px flex flex-1 flex-col border border-[#dcdcdc] bg-white pr-[11px] pl-3.5">
          <p className="mt-[13px] flex gap-3">
            <span>Object name:</span>
            <span>C:\Windows\System32\systemreset.exe</span>
          </p>
          <p className="mt-[17px]">Group or user names:</p>
          <ul role="listbox" aria-label="Group or user names" className="mt-0.5 h-[109px] border border-[#828790] px-px pt-0.5">
            {principals.map(([name, icon]) => (
              <li key={name} role="option" aria-selected={icon === 'usersSelected'} className="flex h-[17px] items-center pl-1">
                <Glyph name={icon} />
                <span className={clsx('flex h-full flex-1 items-center pl-0.5', icon === 'usersSelected' && 'bg-[#0078d7] text-white')}>{name}</span>
              </li>
            ))}
          </ul>
          <div className="mt-[7px] flex justify-end gap-2 pr-px">
            <DialogButton>Add...</DialogButton>
            <DialogButton>Remove</DialogButton>
          </div>
          <div className="mt-3.5 flex">
            <span className="flex-1">Permissions for TrustedInstaller</span>
            <span className="mr-9 w-[26px] text-center">Allow</span>
            <span className="mr-6 w-[26px] text-center">Deny</span>
          </div>
          <div className="mt-0.5 flex h-[99px] overflow-hidden border border-[#555a62]">
            <div className="flex-1">
              <table className="mt-[3px] w-full table-fixed border-collapse">
                <colgroup>
                  <col />
                  <col className="w-[60px]" />
                  <col className="w-8" />
                </colgroup>
                <tbody>
                  {permissions.map((name) => (
                    <tr key={name} className="h-[18px]">
                      <th className="p-0 pl-[11px] text-left font-normal">{name}</th>
                      <td className="p-0"><Check label={`Allow ${name}`} checked /></td>
                      <td className="p-0"><Check label={`Deny ${name}`} /></td>
                    </tr>
                  ))}
                  <tr className="h-[18px] opacity-40">
                    <td className="p-0" />
                    <td className="p-0"><Check label="Allow special permissions" /></td>
                    <td className="p-0"><Check label="Deny special permissions" /></td>
                  </tr>
                </tbody>
              </table>
            </div>
            <div className="flex w-4 flex-col bg-[#f0f0f0]">
              <span className="flex h-[17px] items-center justify-center"><Chevron dir="up" /></span>
              <span className="h-[54px] bg-[#cdcdcd]" />
              <span className="mt-auto flex h-[17px] items-center justify-center"><Chevron dir="down" /></span>
            </div>
          </div>
        </div>
        <div className="mt-[7px] flex justify-end gap-2">
          <DialogButton primary>OK</DialogButton>
          <DialogButton>Cancel</DialogButton>
          <DialogButton>Apply</DialogButton>
        </div>
      </div>
    </section>
  );
}

/* ---------- taskbar ---------- */

function TaskButton({ label, active, children }) {
  return (
    <button aria-label={label} className={clsx('flex h-full w-[37px] items-center justify-center', active && 'border-b-2 border-[#4a5258] bg-[#f3f7f9]')}>
      {children}
    </button>
  );
}

function TrayIcon({ label, className, box, children }) {
  return (
    <button aria-label={label} className={clsx('flex h-full items-center justify-center', className)}>
      <svg viewBox={box} className="h-4" fill="none" stroke="#111" strokeWidth="1.200" aria-hidden="true">
        {children}
      </svg>
    </button>
  );
}

function Taskbar() {
  return (
    <footer className="grid h-[30px] shrink-0 grid-cols-[1fr_auto_1fr] bg-linear-to-r from-[#cfe5ee] to-[#d6dcef] text-black">
      <div />
      <div className="flex">
        <TaskButton label="Start">
          <svg viewBox="0 0 15 15" className="size-[15px]" aria-hidden="true">
            <path d="M0 0h7v7H0zm8 0h7v7H8zM0 8h7v7H0zm8 0h7v7H8z" />
          </svg>
        </TaskButton>
        <TaskButton label="Search">
          <svg viewBox="0 0 16 16" className="size-4" fill="none" stroke="#111" strokeWidth="1.400" aria-hidden="true">
            <circle cx="10" cy="6" r="5" />
            <path d="M6.500 9.500L.8 15.200" />
          </svg>
        </TaskButton>
        <TaskButton label="Task view">
          <svg viewBox="0 0 16 16" className="size-4" fill="none" stroke="#111" strokeWidth="1.300" aria-hidden="true">
            <path d="M0 1v2.500h11V1M0 15v-2.500h11V15M1 4v8M10 4v8M14.500 1v2m0 4v8" />
            <path d="M13 5h3" strokeWidth="2" />
          </svg>
        </TaskButton>
        <TaskButton label="Microsoft Edge">
          <svg viewBox="0 0 48 48" className="size-4" aria-hidden="true"><EdgeMark /></svg>
        </TaskButton>
        <TaskButton label="File Explorer" active>
          <svg viewBox="0 0 16 16" className="size-4" aria-hidden="true">
            <path d="M0 1h6l1.500 2H15v4H0z" fill="#e3a324" />
            <path d="M0 4h16v10H0z" fill="#fbd257" />
            <path d="M3 8h10v7h-3v-3H6v3H3z" fill="#3e8ed0" />
          </svg>
        </TaskButton>
        <TaskButton label="Google Chrome">
          <svg viewBox="0 0 48 48" className="size-4" aria-hidden="true"><ChromeMark /></svg>
        </TaskButton>
      </div>
      <div className="flex items-center justify-end">
        <button className="flex items-center gap-3">
          <svg viewBox="0 0 18 18" className="size-[18px]" aria-hidden="true">
            <path d="M0 1.500h8" stroke="#ef5a9c" strokeWidth="2" />
            <path d="M4 3l4 5H5.500v8h-3V8H0z" fill="#ef6ba6" />
            <path d="M12.500 3a1.500 1.500 0 013 0v8h-3z" fill="#f3a1bf" />
            <path d="M14 6v6" stroke="#d9275f" strokeWidth="1.500" />
            <circle cx="14" cy="14" r="3.300" fill="#d9386d" />
          </svg>
          Re...
        </button>
        <button aria-label="Show hidden icons" className="ml-1.5 flex w-6 justify-center">
          <Chevron dir="up" width={1.1} className="size-4 text-black" />
        </button>
        <TrayIcon label="Network" className="w-6" box="0 0 17 16">
          <path d="M5 3.500h11v7.500H3.500M10 11v3.500M6.500 14.500h7M1.500 2.500h4v4h-4zM3.500 6.500V11" />
        </TrayIcon>
        <TrayIcon label="Volume" className="w-6" box="0 0 17 16">
          <path d="M1 6h2.500L7 2.500v11L3.500 10H1zM9 6q1.500 2 0 4M11.300 4q3 4 0 8M13.600 2.300q4 5.700 0 11.400" />
        </TrayIcon>
        <TrayIcon label="Touch keyboard" className="w-8" box="0 0 24 16">
          <path d="M1 2h22v12H1z" />
          <path d="M4 5.500h17M4 8h17" strokeDasharray="1.500 1.500" />
          <path d="M6 11h12" />
        </TrayIcon>
        <span className="ml-2 whitespace-nowrap">3:40 AM</span>
        <TrayIcon label="Notifications" className="w-[58px]" box="0 0 18 16">
          <path d="M1.500 1.500h15v11h-5L9 15.500V12.500H1.500z" />
        </TrayIcon>
        <button aria-label="Show desktop" className="h-full w-1 border-l border-[#a9b2c6]" />
      </div>
    </footer>
  );
}

export default function App() {
  return (
    <div className="flex h-screen flex-col overflow-hidden bg-[radial-gradient(circle_at_0_0,rgba(0,110,225,0.4),transparent_420px),linear-gradient(78deg,#00b2fb_0%,#00a8f8_28%,#0096f0_42%,#006cda_60%,#0048c4_78%,#0038b2_100%)] font-['Open_Sans','Segoe_UI',sans-serif] text-[12px]">
      <main className="relative min-h-0 flex-1">
        <div className="grid grid-cols-[repeat(13,78px)] grid-rows-[repeat(7,101px)]">
          {desktopItems.map((item) => (
            <DesktopIcon key={item.cell} {...item} />
          ))}
        </div>
        <Explorer />
        <Properties />
        <Permissions />
      </main>
      <Taskbar />
    </div>
  );
}
